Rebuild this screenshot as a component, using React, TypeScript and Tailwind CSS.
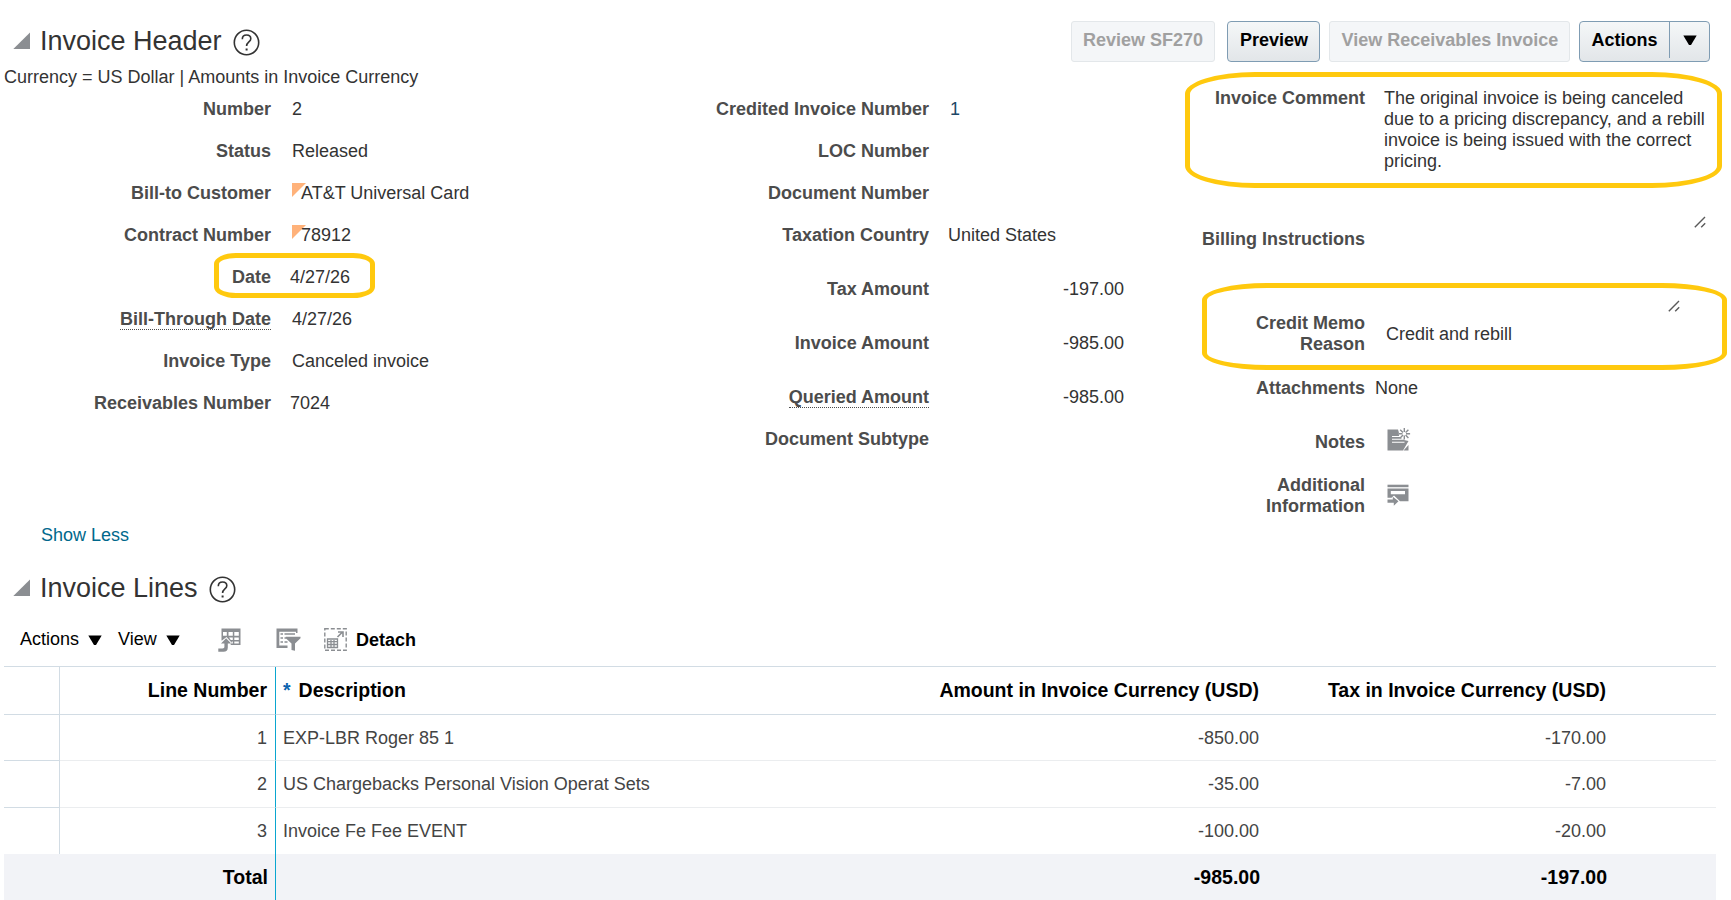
import type { ReactNode } from 'react';

interface FieldProps {
  label: string;
  hint?: boolean;
  className?: string;
  children?: ReactNode;
}

const lines = [
  { number: 1, description: 'EXP-LBR Roger 85 1', amount: '-850.00', tax: '-170.00', height: 'h-[46px]' },
  { number: 2, description: 'US Chargebacks Personal Vision Operat Sets', amount: '-35.00', tax: '-7.00', height: 'h-[47px]' },
  { number: 3, description: 'Invoice Fe Fee EVENT', amount: '-100.00', tax: '-20.00', height: 'h-[46px]' },
];

function Field({ label, hint, className = 'h-[42px]', children }: FieldProps) {
  return (
    <div className={`flex items-start ${className}`}>
      <div className="w-full flex justify-end font-bold text-[#4c4c4c] text-right">
        <span className={hint ? 'h-[21px] border-b border-dotted border-[#4c4c4c]' : ''}>{label}</span>
      </div>
      <div className="w-0 overflow-visible whitespace-nowrap">{children}</div>
    </div>
  );
}

function Disclosure() {
  return (
    <svg width="18" height="18" viewBox="0 0 18 18">
      <path d="M17 0.5V17H0.3Z" fill="#8b8e92" />
    </svg>
  );
}

function HelpIcon() {
  return (
    <svg width="27" height="27" viewBox="0 0 27 27" fill="none" stroke="#333" strokeWidth="1.6">
      <circle cx="13.5" cy="13.5" r="12.2" />
      <path d="M9.3 10.2C9.3 7.6 11 6 13.6 6C16 6 17.8 7.6 17.8 9.8C17.8 13 13.6 13 13.6 17" />
      <path d="M13.6 19.5V21.5" strokeWidth="2" />
    </svg>
  );
}

function SectionTitle({ children }: { children: ReactNode }) {
  return (
    <div className="flex items-center">
      <Disclosure />
      <h2 className="ml-[9px] text-[27px] leading-[34px] text-[#333]">{children}</h2>
      <div className="ml-[11px] mt-[2px]">
        <HelpIcon />
      </div>
    </div>
  );
}

function Caret() {
  return (
    <svg width="14" height="11" viewBox="0 0 14 11">
      <path d="M0.3 0.5H13.7L8 10H6Z" fill="#000" />
    </svg>
  );
}

function Flag() {
  return (
    <svg className="shrink-0" width="14" height="14" viewBox="0 0 14 14">
      <path d="M0 0H14L0 14Z" fill="#ffb27a" />
    </svg>
  );
}

function ResizeGrip() {
  return (
    <svg width="13" height="12" viewBox="0 0 13 12" stroke="#5a5a5a" strokeWidth="1.4">
      <path d="M0.8 11.2L11 1M7.2 11.2L11.2 7.2" />
    </svg>
  );
}

function NotesIcon() {
  return (
    <svg width="24" height="24" viewBox="0 0 24 24">
      <path d="M0.5 1.5H11L13 8L17 12L21.5 13L16 22.5H0.5Z" fill="#8b8e92" />
      <path d="M5 8.5H13M5 11.3H16M5 14.3H17.5" stroke="#fff" strokeWidth="1.1" />
      <path d="M21.5 17V22.5H16.5Z" fill="#8b8e92" />
      <circle cx="17.3" cy="5.8" r="5.6" fill="#fff" />
      <path d="M17.3 0V4M17.3 7.5V11.6M11.5 5.8H15.5M19 5.8H23.1M13.2 1.7L16 4.5M18.6 7.1L21.4 9.9M21.4 1.7L18.6 4.5M16 7.1L13.2 9.9" stroke="#8b8e92" strokeWidth="1.4" />
    </svg>
  );
}

function InfoIcon() {
  return (
    <svg width="22" height="22" viewBox="0 0 22 22" fill="#8b8e92">
      <path d="M0.5 0.7H21.5V3.2H0.5Z" />
      <path d="M0.5 4.6H21.5V17.3H13L7 11.5L4.5 13.8H0.5ZM3.8 7V10.2H18V7Z" fillRule="evenodd" />
      <path d="M0.5 15.6H5.8V12.8L11.5 17.2L6.8 21.8V18.8H0.5Z" />
    </svg>
  );
}

function ExportIcon() {
  return (
    <svg width="24" height="24" viewBox="0 0 24 24">
      <path d="M3.5 0.5H22.5V17H12.5L13.5 14.5L8.5 9L4 12.5H3.5Z" fill="#8b8e92" />
      <path d="M5 4H8.8V7.8H5ZM10.5 4H14.8V7.8H10.5ZM16.3 4H20.8V7.8H16.3ZM11 9.5H14.8V12H12.8ZM16.3 9.5H20.8V12H16.3ZM13.8 13.5H14.8V15.6H13.2ZM16.3 13.5H20.8V15.6H16.3Z" fill="#fff" />
      <path d="M0.3 20.5H4.5C5.8 20.5 6.4 20 6.4 18.8V15.5H3L8.1 10.3L13.2 15.5H9.8V19.5C9.8 22.5 8.3 23.7 5.5 23.7H0.3Z" fill="#8b8e92" />
    </svg>
  );
}

function FilterIcon() {
  return (
    <svg width="25" height="24" viewBox="0 0 25 24">
      <path d="M0.5 0.5H21.5V5H20V3.8H3.3V17.5H11.5V20H0.5Z" fill="#8b8e92" />
      <path d="M4.5 6H7M8.5 6H19M4.5 10H7M8.5 10H10.5M4.5 14H7M8.5 14H11.5" stroke="#8b8e92" strokeWidth="1.6" />
      <path d="M9.8 8.8H24.5V10.2L19 15.5V22.8L15.5 22V15.5L9.8 10.2Z" fill="#8b8e92" />
    </svg>
  );
}

function DetachIcon() {
  return (
    <svg width="23" height="23" viewBox="0 0 23 23" fill="none" stroke="#8b8e92">
      <rect x="0.8" y="0.8" width="21.4" height="21.4" strokeWidth="1.4" strokeDasharray="4 2" />
      <path d="M3.5 11H13.5V19.5H3.5ZM3.5 13.7H13.5M3.5 16.5H13.5M7 12V19.5M10 12V19.5" strokeWidth="1.3" />
      <path d="M13.5 9L18 4.5M14 4H19V9" strokeWidth="1.6" />
    </svg>
  );
}

export default function App() {
  return (
    <main className="w-[1731px] h-[900px] relative overflow-hidden bg-white font-['Liberation_Sans',Arial,sans-serif] text-[18px] leading-[21px] text-[#333]">
      <header className="flex justify-between items-start pl-[13px] pr-[21px] pt-[21px] h-[67px]">
        <div className="pt-[3px]">
          <SectionTitle>Invoice Header</SectionTitle>
        </div>
        <div className="flex font-bold text-black">
          <button className="w-[144px] h-[41px] pb-[3px] mr-3 rounded-[3px] border border-[#e3e7ea] bg-[#f4f6f8] text-[#a0a0a0]">Review SF270</button>
          <button className="w-[93px] h-[41px] pb-[3px] pl-px mr-[9px] rounded-[4px] border border-[#7f9cb3] bg-linear-to-b from-[#f5f7f8] to-[#e2e6e9]">Preview</button>
          <button className="w-[241px] h-[41px] pb-[3px] pl-px mr-[9px] rounded-[3px] border border-[#e3e7ea] bg-[#f4f6f8] text-[#a0a0a0]">View Receivables Invoice</button>
          <div className="flex w-[131px] h-[41px] rounded-[4px] border border-[#7f9cb3] bg-linear-to-b from-[#f5f7f8] to-[#e2e6e9]">
            <button className="w-[90px] h-[36px] border-r border-[#7f9cb3]">Actions</button>
            <button className="flex-1 flex justify-center pt-[13px]">
              <Caret />
            </button>
          </div>
        </div>
      </header>

      <p className="pl-1 h-[21px]">Currency = US Dollar | Amounts in Invoice Currency</p>

      <section className="flex items-start h-[437px]">
        <div className="w-[271px] shrink-0 pt-[11px]">
          <Field label="Number"><span className="ml-[21px]">2</span></Field>
          <Field label="Status"><span className="ml-[21px]">Released</span></Field>
          <Field label="Bill-to Customer">
            <div className="ml-[21px] flex"><Flag /><span className="-ml-[5px]">AT&amp;T Universal Card</span></div>
          </Field>
          <Field label="Contract Number">
            <div className="ml-[21px] flex"><Flag /><span className="-ml-[5px]">78912</span></div>
          </Field>
          <Field label="Date"><span className="ml-[19px]">4/27/26</span></Field>
          <Field label="Bill-Through Date" hint><span className="ml-[21px]">4/27/26</span></Field>
          <Field label="Invoice Type"><span className="ml-[21px]">Canceled invoice</span></Field>
          <Field label="Receivables Number"><span className="ml-[19px]">7024</span></Field>
        </div>

        <div className="w-[658px] shrink-0 pt-[11px]">
          <Field label="Credited Invoice Number"><span className="ml-[21px] text-[#1d4766]">1</span></Field>
          <Field label="LOC Number" />
          <Field label="Document Number" />
          <Field label="Taxation Country" className="h-[54px]"><span className="ml-[19px]">United States</span></Field>
          <Field label="Tax Amount" className="h-[54px]"><div className="w-[195px] text-right">-197.00</div></Field>
          <Field label="Invoice Amount" className="h-[54px]"><div className="w-[195px] text-right">-985.00</div></Field>
          <Field label="Queried Amount" hint><div className="w-[195px] text-right">-985.00</div></Field>
          <Field label="Document Subtype" />
        </div>

        <div className="w-[436px] shrink-0">
          <Field label="Invoice Comment" className="h-[126px]">
            <p className="w-[330px] ml-[19px] whitespace-normal">
              The original invoice is being canceled<br />due to a pricing discrepancy, and a rebill<br />invoice is being issued with the correct<br />pricing.
            </p>
          </Field>
          <Field label="" className="h-[15px]"><div className="ml-[329px] pt-[2px]"><ResizeGrip /></div></Field>
          <Field label="Billing Instructions" className="h-[69px]" />
          <Field label="" className="h-[15px]"><div className="ml-[303px] pt-[2px]"><ResizeGrip /></div></Field>
          <div className="h-[65px]">
            <div className="flex">
              <div className="w-full text-right font-bold text-[#4c4c4c]">Credit Memo<br />Reason</div>
              <div className="w-0 pt-[11px] whitespace-nowrap"><span className="ml-[21px]">Credit and rebill</span></div>
            </div>
          </div>
          <Field label="Attachments" className="h-[54px]"><span className="ml-[10px]">None</span></Field>
          <Field label="Notes" className="h-[43px]"><div className="ml-[22px] -mt-[4px]"><NotesIcon /></div></Field>
          <div className="flex">
            <div className="w-full text-right font-bold text-[#4c4c4c]">Additional<br />Information</div>
            <div className="w-0 pt-[9px]"><div className="ml-[22px] w-[22px]"><InfoIcon /></div></div>
          </div>
        </div>
      </section>

      <a className="block w-fit ml-[41px] h-[46px] text-[#00688c]" href="#">Show Less</a>

      <div className="pl-[13px] h-[48px]">
        <SectionTitle>Invoice Lines</SectionTitle>
      </div>

      <div className="flex h-[47px] pl-5 pt-[9px] text-black">
        <button className="flex w-[98px] h-[23px] items-center">Actions <span className="ml-[9px] mt-[2px]"><Caret /></span></button>
        <button className="flex w-[100px] h-[23px] items-center">View <span className="ml-[9px] mt-[2px]"><Caret /></span></button>
        <div className="w-[58px]"><ExportIcon /></div>
        <div className="w-[48px]"><FilterIcon /></div>
        <DetachIcon />
        <button className="ml-[9px] h-[24px] font-bold">Detach</button>
      </div>

      <div className="ml-1 w-[1712px] border-t border-[#d2dce4]">
        <div className="flex h-[48px] text-[19.5px] font-bold text-black">
          <div className="w-[56px] border-r border-b border-[#d2dce4]" />
          <div className="w-[216px] pr-[8px] pt-[13px] text-right border-r border-r-[#0aa6d0] border-b border-b-[#d2dce4]">Line Number</div>
          <div className="w-[645px] pl-[7px] pt-[13px] border-b border-[#d2dce4]"><span className="text-[#0b63ae] mr-[8px]">*</span>Description</div>
          <div className="w-[347px] pr-[9px] pt-[13px] text-right border-b border-[#d2dce4]">Amount in Invoice Currency (USD)</div>
          <div className="w-[347px] pr-[9px] pt-[13px] text-right border-b border-[#d2dce4]">Tax in Invoice Currency (USD)</div>
          <div className="flex-1 border-b border-[#d2dce4]" />
        </div>
        {lines.map((line) => (
          <div key={line.number} className={`flex text-[#444] ${line.height}`}>
            <div className={`w-[56px] border-r border-[#d2dce4] ${line.number < 3 ? 'border-b' : ''}`} />
            <div className={`w-[216px] pr-[8px] pt-[13px] text-right border-r border-r-[#0aa6d0] border-b-[#ebedef] ${line.number < 3 ? 'border-b' : ''}`}>{line.number}</div>
            <div className={`w-[645px] pl-[7px] pt-[13px] border-[#ebedef] ${line.number < 3 ? 'border-b' : ''}`}>{line.description}</div>
            <div className={`w-[347px] pr-[9px] pt-[13px] text-right border-[#ebedef] ${line.number < 3 ? 'border-b' : ''}`}>{line.amount}</div>
            <div className={`w-[347px] pr-[9px] pt-[13px] text-right border-[#ebedef] ${line.number < 3 ? 'border-b' : ''}`}>{line.tax}</div>
            <div className={`flex-1 border-[#ebedef] ${line.number < 3 ? 'border-b' : ''}`} />
          </div>
        ))}
        <div className="flex h-[46px] bg-[#f2f3f7] text-[19.5px] font-bold text-black">
          <div className="w-[272px] pr-[7px] pt-[13px] text-right border-r border-[#0aa6d0]">Total</div>
          <div className="w-[992px] pr-[8px] pt-[13px] text-right">-985.00</div>
          <div className="w-[347px] pr-[8px] pt-[13px] text-right">-197.00</div>
        </div>
      </div>

      {/* Highlight outlines */}
      <div className="absolute left-[214px] top-[253px] w-[161px] h-[45px] border-5 border-[#ffc90e] [border-radius:22px/11px]" />
      <div className="absolute left-[1185px] top-[72px] w-[537px] h-[116px] border-5 border-[#ffc90e] [border-radius:70px/22px]" />
      <div className="absolute left-[1202px] top-[283px] w-[525px] h-[87px] border-5 border-[#ffc90e] [border-radius:65px/17px]" />
    </main>
  );
}
